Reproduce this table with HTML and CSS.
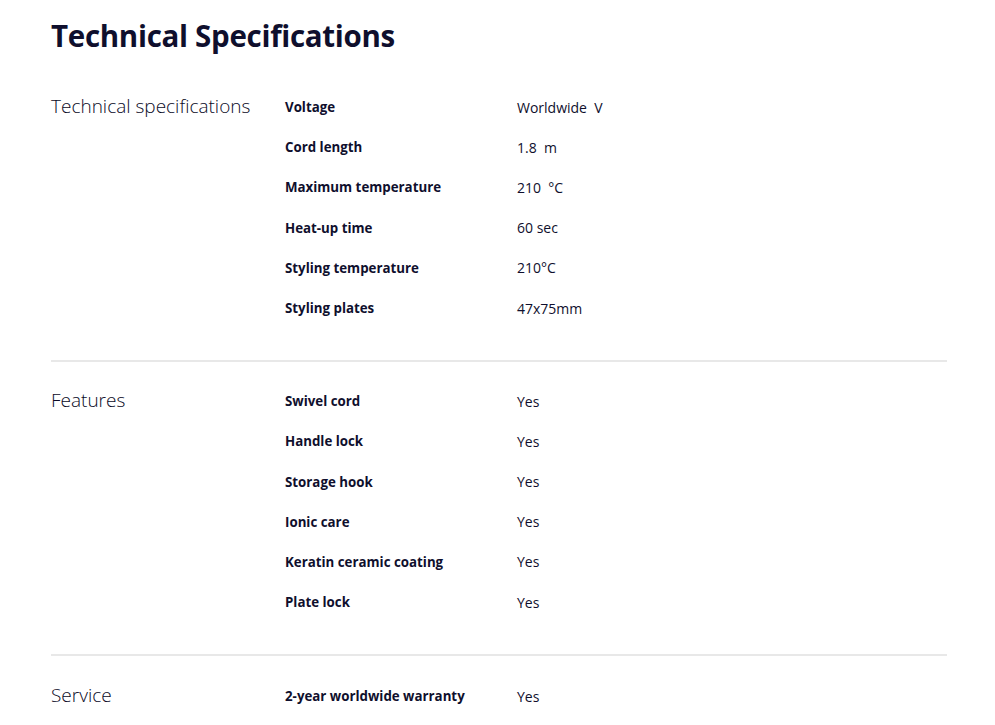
FILE: index.html
```html
<!DOCTYPE html>
<html lang="en">
<head>
<meta charset="utf-8">
<title>Technical Specifications</title>
<link rel="stylesheet" href="styles.css">
</head>
<body>
<main class="page">
  <h1 class="title">Technical Specifications</h1>
  <section class="group">
    <h2 class="group-name">Technical specifications</h2>
    <dl class="specs">
      <div class="row"><dt>Voltage</dt><dd>Worldwide&nbsp; V</dd></div>
      <div class="row"><dt>Cord length</dt><dd>1.8&nbsp; m</dd></div>
      <div class="row"><dt>Maximum temperature</dt><dd>210&nbsp; °C</dd></div>
      <div class="row"><dt>Heat-up time</dt><dd>60 sec</dd></div>
      <div class="row"><dt>Styling temperature</dt><dd>210°C</dd></div>
      <div class="row"><dt>Styling plates</dt><dd>47x75mm</dd></div>
    </dl>
  </section>
  <section class="group">
    <h2 class="group-name">Features</h2>
    <dl class="specs">
      <div class="row"><dt>Swivel cord</dt><dd>Yes</dd></div>
      <div class="row"><dt>Handle lock</dt><dd>Yes</dd></div>
      <div class="row"><dt>Storage hook</dt><dd>Yes</dd></div>
      <div class="row"><dt>Ionic care</dt><dd>Yes</dd></div>
      <div class="row"><dt>Keratin ceramic coating</dt><dd>Yes</dd></div>
      <div class="row"><dt>Plate lock</dt><dd>Yes</dd></div>
    </dl>
  </section>
  <section class="group">
    <h2 class="group-name">Service</h2>
    <dl class="specs">
      <div class="row"><dt>2-year worldwide warranty</dt><dd>Yes</dd></div>
    </dl>
  </section>
</main>
</body>
</html>
```

FILE: styles.css
```css
* { box-sizing: border-box; }
html, body { margin: 0; padding: 0; background: #fff; }
body {
  font-family: "Open Sans", "Noto Sans", sans-serif;
  color: #0f0f2d;
}
.page {
  padding: 0 48px 0 51px;
}
.title {
  margin: 0;
  padding-top: 14px;
  height: 87px;
  font-size: 29.5px;
  font-weight: 700;
  line-height: 44px;
  letter-spacing: -0.3px;
}
.group {
  display: flex;
  padding-bottom: 32px;
  border-bottom: 2px solid #e8e8e8;
}
.group + .group { padding-top: 19px; }
.group:last-child { border-bottom: none; padding-top: 20px; }
.group-name {
  width: 234px;
  flex: none;
  margin: 0;
  font-size: 19px;
  font-weight: 300;
  line-height: 38px;
  color: #0a0a26;
}
.specs {
  margin: 0;
  flex: 1;
}
.row {
  display: flex;
  height: 40.2px;
  align-items: center;
}
.row dt {
  width: 232px;
  flex: none;
  font-weight: 700;
  font-size: 13.3px;
}
.row dd {
  margin: 0;
  font-weight: 400;
  font-size: 14px;
}
```
